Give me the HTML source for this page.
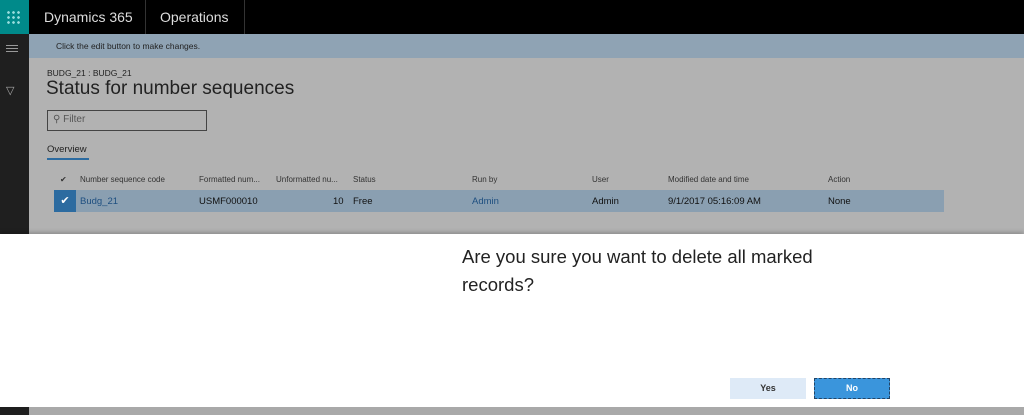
<!DOCTYPE html>
<html><head><style>
*{margin:0;padding:0;box-sizing:border-box}
body{width:1024px;height:415px;overflow:hidden;background:#b2b2b2;font-family:"Liberation Sans",sans-serif;position:relative}
.a{position:absolute}
</style></head><body>
<div class="a" style="left:0;top:0;width:1024px;height:34px;background:#000"></div>
<div class="a" style="left:0;top:0;width:29px;height:34px;background:#008a8a"></div>
<div class="a" style="left:6px;top:10px;width:16px;height:14px;background:radial-gradient(circle,#9dd 1.2px,transparent 1.5px) 0 0/5px 5px"></div>
<div class="a" style="left:44px;top:9px;color:#ddd;font-size:14px">Dynamics 365</div>
<div class="a" style="left:145px;top:0;width:1px;height:34px;background:#333"></div>
<div class="a" style="left:160px;top:9px;color:#ddd;font-size:14px">Operations</div>
<div class="a" style="left:244px;top:0;width:1px;height:34px;background:#333"></div>
<div class="a" style="left:0;top:34px;width:29px;height:381px;background:#1f1f1f"></div>
<div class="a" style="left:6px;top:45px;width:12px;height:7px;border-top:1px solid #999;border-bottom:1px solid #999"></div>
<div class="a" style="left:6px;top:48px;width:12px;height:1px;background:#999"></div>
<div class="a" style="left:6px;top:84px;color:#aaa;font-size:11px">▽</div>
<div class="a" style="left:29px;top:34px;width:995px;height:24px;background:#8fa3b4"></div>
<div class="a" style="left:56px;top:41px;font-size:8.5px;color:#222">Click the edit button to make changes.</div>
<div class="a" style="left:47px;top:68px;font-size:8.5px;color:#222">BUDG_21 : BUDG_21</div>
<div class="a" style="left:46px;top:78px;font-size:19px;color:#222">Status for number sequences</div>
<div class="a" style="left:47px;top:110px;width:160px;height:21px;border:1px solid #444"></div>
<div class="a" style="left:53px;top:114px;font-size:10px;color:#555">⚲ Filter</div>
<div class="a" style="left:47px;top:144px;font-size:9.5px;color:#222">Overview</div>
<div class="a" style="left:47px;top:158px;width:42px;height:2px;background:#2c6ba0"></div>
<div class="a" style="top:175px;left:0;width:1024px;font-size:8px;color:#333">
<span class="a" style="left:60px">✔</span><span class="a" style="left:80px">Number sequence code</span><span class="a" style="left:199px">Formatted num...</span><span class="a" style="left:276px">Unformatted nu...</span><span class="a" style="left:353px">Status</span><span class="a" style="left:472px">Run by</span><span class="a" style="left:592px">User</span><span class="a" style="left:668px">Modified date and time</span><span class="a" style="left:828px">Action</span></div>
<div class="a" style="left:54px;top:190px;width:890px;height:22px;background:#8a9fb1"></div>
<div class="a" style="left:54px;top:190px;width:22px;height:22px;background:#2c6ba0;color:#fff;font-size:11px;text-align:center;line-height:22px">✔</div>
<div class="a" style="top:196px;left:0;width:1024px;font-size:9.5px;color:#111">
<span class="a" style="left:80px;color:#1e4f80">Budg_21</span><span class="a" style="left:199px">USMF000010</span><span class="a" style="left:333px">10</span><span class="a" style="left:353px">Free</span><span class="a" style="left:472px;color:#1e4f80">Admin</span><span class="a" style="left:592px">Admin</span><span class="a" style="left:668px">9/1/2017 05:16:09 AM</span><span class="a" style="left:828px">None</span></div>
<div class="a" style="left:0;top:234px;width:1024px;height:173px;background:#fff;box-shadow:0 -2px 4px rgba(0,0,0,.2)"></div>
<div class="a" style="left:462px;top:243px;width:400px;font-size:18.5px;line-height:28px;color:#222">Are you sure you want to delete all marked records?</div>
<div class="a" style="left:730px;top:378px;width:76px;height:21px;background:#deeaf7;font-size:9px;font-weight:bold;color:#333;text-align:center;line-height:21px">Yes</div>
<div class="a" style="left:814px;top:378px;width:76px;height:21px;background:#3a95dc;border:1px dashed #246;font-size:9px;font-weight:bold;color:#fff;text-align:center;line-height:19px">No</div>
<div class="a" style="left:29px;top:407px;width:995px;height:8px;background:#a9a9a9"></div>
</body></html>
